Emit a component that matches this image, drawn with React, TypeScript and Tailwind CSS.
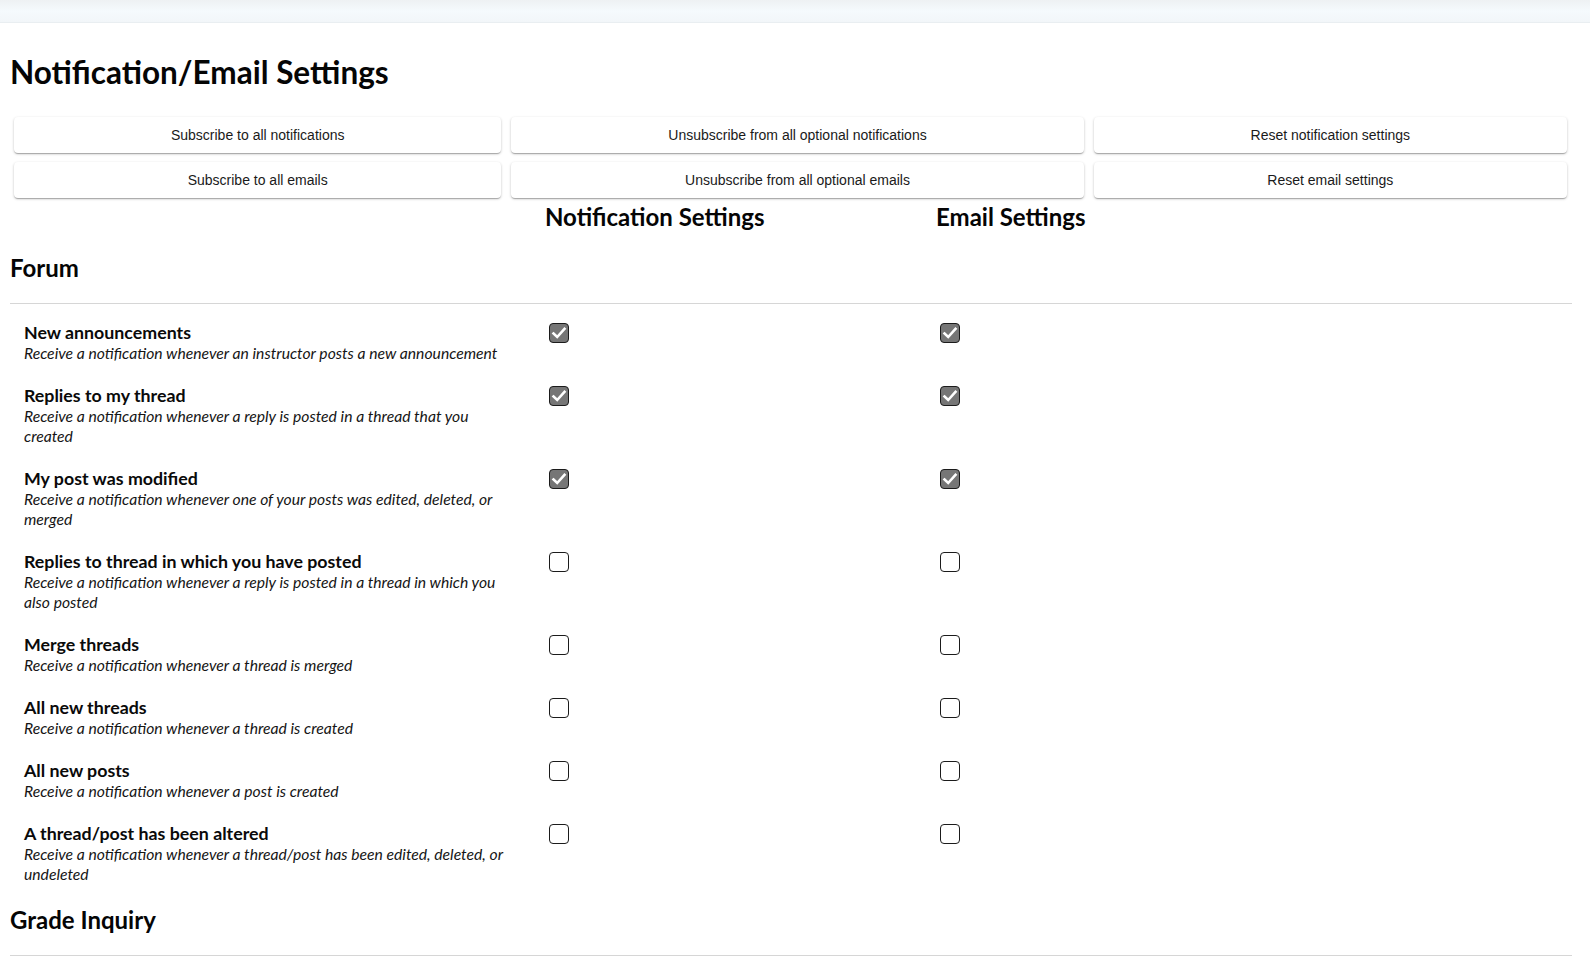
import React from "react";

type Item = { title: string; desc: string; checked: boolean };

const forum: Item[] = [
  { title: "New announcements", desc: "Receive a notification whenever an instructor posts a new announcement", checked: true },
  { title: "Replies to my thread", desc: "Receive a notification whenever a reply is posted in a thread that you created", checked: true },
  { title: "My post was modified", desc: "Receive a notification whenever one of your posts was edited, deleted, or merged", checked: true },
  { title: "Replies to thread in which you have posted", desc: "Receive a notification whenever a reply is posted in a thread in which you also posted", checked: false },
  { title: "Merge threads", desc: "Receive a notification whenever a thread is merged", checked: false },
  { title: "All new threads", desc: "Receive a notification whenever a thread is created", checked: false },
  { title: "All new posts", desc: "Receive a notification whenever a post is created", checked: false },
  { title: "A thread/post has been altered", desc: "Receive a notification whenever a thread/post has been edited, deleted, or undeleted", checked: false },
];

function Box({ checked }: { checked: boolean }) {
  return (
    <div
      className={
        checked
          ? "mt-[2px] h-[20px] w-[20px] rounded-[4px] border border-[#1b1b1b] bg-[#767676] flex items-center justify-center"
          : "mt-[2px] h-[20px] w-[20px] rounded-[4px] border border-[#1b1b1b] bg-white"
      }
    >
      {checked && (
        <svg width="18" height="18" viewBox="0 0 18 18">
          <path d="M3.5 9.5 L7.2 13 L14.5 4.8" fill="none" stroke="white" strokeWidth="2.6" strokeLinecap="square" />
        </svg>
      )}
    </div>
  );
}

function Btn({ children }: { children: React.ReactNode }) {
  return (
    <button className="h-[36px] rounded-[4px] bg-white px-4 text-[14px] text-[#1a1a1a] shadow-[0_1px_3px_rgba(0,0,0,0.2),0_1px_1px_rgba(0,0,0,0.14),0_2px_1px_-1px_rgba(0,0,0,0.12)] whitespace-nowrap [font-family:'Liberation_Sans',Arial,sans-serif]">
      {children}
    </button>
  );
}

function Section({ name }: { name: string }) {
  return (
    <div className="pl-[1px]">
      <h2 className="text-[24px] leading-[30px] font-bold text-[#050505]">{name}</h2>
      <div className="mt-[20px] border-t border-[#d6d6d6]" />
    </div>
  );
}

export default function App() {
  return (
    <div className="min-h-screen bg-white text-[#111] [font-family:Lato,'Noto_Sans',sans-serif]">
      <div className="h-[23px] bg-gradient-to-b from-[#eef1f3] via-[#f5fafd] to-[#f2f6f9] border-b border-[#e9eef1]" />
      <div className="pl-[9px] pr-[18px]">
        <h1 className="mt-[29px] pl-[1px] text-[31.5px] leading-[40px] font-bold text-[#050505]">Notification/Email Settings</h1>
        <div className="mt-[25px] mx-[5px] grid grid-cols-[auto_auto_auto] gap-x-[10px] gap-y-[9px]">
          <Btn>Subscribe to all notifications</Btn>
          <Btn>Unsubscribe from all optional notifications</Btn>
          <Btn>Reset notification settings</Btn>
          <Btn>Subscribe to all emails</Btn>
          <Btn>Unsubscribe from all optional emails</Btn>
          <Btn>Reset email settings</Btn>
        </div>
        <div className="mt-[4px] grid grid-cols-[536px_391px_1fr]">
          <div />
          <div className="text-[24px] leading-[30px] font-bold text-[#050505]">Notification Settings</div>
          <div className="text-[24px] leading-[30px] font-bold text-[#050505]">Email Settings</div>
        </div>
        <div className="mt-[21px]">
          <Section name="Forum" />
          <div className="mt-[17px] grid grid-cols-[536px_391px_1fr]">
            {forum.map((it) => (
              <React.Fragment key={it.title}>
                <div className="pl-[15px] pb-[21px]">
                  <div className="w-[492px] text-[17.8px] leading-[22px] font-bold text-[#0a0a0a]">{it.title}</div>
                  <div className="w-[492px] text-[15.7px] leading-[20px] italic text-[#151515]">{it.desc}</div>
                </div>
                <div className="pl-[4px]">
                  <Box checked={it.checked} />
                </div>
                <div className="pl-[4px]">
                  <Box checked={it.checked} />
                </div>
              </React.Fragment>
            ))}
          </div>
          <Section name="Grade Inquiry" />
        </div>
      </div>
    </div>
  );
}
